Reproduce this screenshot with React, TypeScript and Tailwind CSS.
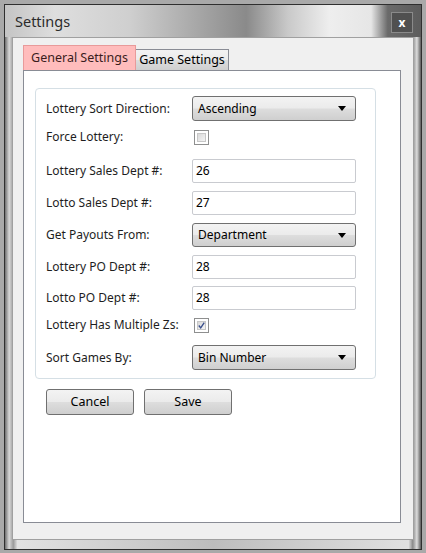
import { useState } from "react";

interface field {
  label: string;
  kind: "combo" | "text" | "check";
  value?: string;
  checked?: boolean;
  gap: string;
  height: string;
}

const fields: Array<field> = [
  { label: "Lottery Sort Direction:", kind: "combo", value: "Ascending", gap: "mt-0", height: "h-[25px]" },
  { label: "Force Lottery:", kind: "check", checked: false, gap: "mt-[8px]", height: "h-[16px]" },
  { label: "Lottery Sales Dept #:", kind: "text", value: "26", gap: "mt-[14px]", height: "h-[24px]" },
  { label: "Lotto Sales Dept #:", kind: "text", value: "27", gap: "mt-[8px]", height: "h-[24px]" },
  { label: "Get Payouts From:", kind: "combo", value: "Department", gap: "mt-[8px]", height: "h-[24px]" },
  { label: "Lottery PO Dept #:", kind: "text", value: "28", gap: "mt-[8px]", height: "h-[24px]" },
  { label: "Lotto PO Dept #:", kind: "text", value: "28", gap: "mt-[7px]", height: "h-[24px]" },
  { label: "Lottery Has Multiple Zs:", kind: "check", checked: true, gap: "mt-[7px]", height: "h-[16px]" },
  { label: "Sort Games By:", kind: "combo", value: "Bin Number", gap: "mt-[12px]", height: "h-[25px]" },
];

const ComboBox = ({ value }: { value?: string }) => (
  <div className="w-[164px] h-full flex items-center justify-between pl-[5px] pr-[9px] border border-[#707070] rounded-[3px] bg-[linear-gradient(180deg,#f3f3f3_0%,#ebebeb_48%,#dddddd_52%,#cfcfcf_100%)] text-[12px] text-black">
    <span>{value}</span>
    <svg width="8" height="5" viewBox="0 0 8 5">
      <path d="M0 0 H8 L4 5 Z" fill="#000" />
    </svg>
  </div>
);

const TextBox = ({ value }: { value?: string }) => (
  <div className="w-[164px] h-full flex items-center pl-[3px] border border-[#c9cbd0] rounded-[2px] bg-white text-[12px] text-black">
    {value}
  </div>
);

const CheckBox = ({ checked }: { checked?: boolean }) => (
  <div className="ml-[2px] w-[15px] h-[15px] border border-[#8e8f8f] bg-white p-[2px]">
    <div className="w-full h-full border border-[#c7c7c7] bg-[linear-gradient(135deg,#d9d9d9_0%,#f4f4f4_100%)] flex items-center justify-center">
      {checked && (
        <svg width="9" height="9" viewBox="0 0 9 9">
          <path d="M1 4.5 L3.5 7.5 L8 0.8" stroke="#3a4f8c" strokeWidth="1.8" fill="none" />
        </svg>
      )}
    </div>
  </div>
);

const btn =
  "w-[88px] h-[26px] border border-[#707070] rounded-[3px] bg-[linear-gradient(180deg,#f3f3f3_0%,#ebebeb_48%,#dddddd_52%,#cfcfcf_100%)] text-[12.5px] text-black";

const SettingsDialog = () => {
  const [tab] = useState(0);

  return (
    <div className="w-[426px] h-[553px] bg-[#a9a9a9] pt-[4px] pl-[4px] font-['Noto_Sans','Open_Sans',sans-serif]">
      <div className="w-[418px] h-[546px] border border-[#2f2f2f] bg-[linear-gradient(90deg,#6f6f6f_0%,#d8d8d8_1%,#9a9a9a_2%,#e2e2e2_3%,#bdbdbd_50%,#e0e0e0_97%,#8a8a8a_98%,#dcdcdc_99%,#5a5a5a_100%)] flex flex-col">
        <div className="h-[32px] flex items-center justify-between pl-[10px] pr-[8px] bg-[linear-gradient(90deg,#c4c4c4_0%,#dedede_12%,#cfcfcf_30%,#8a8a8a_58%,#c9c9c9_68%,#eeeeee_78%,#e6e6e6_88%,#6a6a6a_92%,#5c5c5c_100%)]">
          <span className="text-[14.5px] text-[#2b2b2b] mt-[2px]">Settings</span>
          <div className="w-[22px] h-[21px] mt-[3px] border border-[#8a8a8a] bg-[#505050] flex items-center justify-center text-white text-[12px] font-bold leading-none">
            x
          </div>
        </div>

        <div className="mx-[7px] mb-[9px] flex-1 border border-[#a0a0a0] bg-[#f0f0f0] pt-[7px] pl-[10px] pr-[12px] pb-[16px] flex flex-col">
          <div className="flex items-end h-[25px] relative z-10">
            <div className={`h-[25px] w-[113px] flex items-center justify-center border border-[#e89a9a] border-b-0 bg-[#ffbcbc] text-[12.5px] text-[#3b1c1c] ${tab === 0 ? "" : ""}`}>
              General Settings
            </div>
            <div className="h-[21px] w-[93px] flex items-center justify-center border border-[#898c95] border-l-0 border-b-0 bg-[linear-gradient(180deg,#f2f2f2_0%,#ebebeb_50%,#dddddd_51%,#cfcfcf_100%)] text-[12.5px] text-black">
              Game Settings
            </div>
          </div>

          <div className="flex-1 border border-[#898c95] bg-white pt-[17px] pl-[11px]">
            <div className="w-[341px] border border-[#d5dfe5] rounded-[4px] pt-[7px] pb-[8px] pl-[10px] flex flex-col">
              {fields.map((f, i) => (
                <div key={i} className={`flex items-center ${f.gap} ${f.height}`}>
                  <div className="w-[146px] text-[12px] text-[#1e1e1e] whitespace-nowrap">{f.label}</div>
                  {f.kind === "combo" && <ComboBox value={f.value} />}
                  {f.kind === "text" && <TextBox value={f.value} />}
                  {f.kind === "check" && <CheckBox checked={f.checked} />}
                </div>
              ))}
            </div>
            <div className="flex gap-[10px] mt-[10px] ml-[11px]">
              <button className={btn}>Cancel</button>
              <button className={btn}>Save</button>
            </div>
          </div>
        </div>
      </div>
    </div>
  );
};

export default SettingsDialog;
